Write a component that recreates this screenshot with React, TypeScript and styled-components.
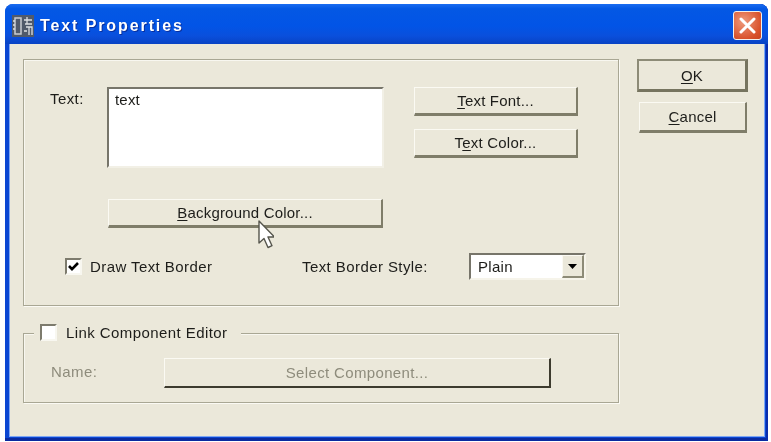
import styled, { createGlobalStyle } from "styled-components"

const Global = createGlobalStyle`
  html, body { margin: 0; background: #fff; }
  body { font-family: "Liberation Sans", Arial, sans-serif; width: 771px; height: 442px; overflow: hidden; }
`

const Dialog = styled.div`
  background: #0a46d2;
  border-radius: 8px 8px 0 0;
  box-shadow: inset -2px 0 0 #0a2cab, inset 0 -3px 0 #0a2a9f;
  box-sizing: border-box;
  display: flex;
  filter: blur(0.35px);
  flex-direction: column;
  height: 437px;
  margin: 4px 0 0 5px;
  padding: 0 3px 4px 4px;
  width: 763px;
`
const TitleBar = styled.div`
  align-items: center;
  background: linear-gradient(180deg, #1a6cf0 0, #0458e4 12%, #0254e6 55%, #0a4fdc 80%, #0843c4 100%);
  border-radius: 8px 8px 0 0;
  box-sizing: border-box;
  display: flex;
  flex: 0 0 40px;
  margin: 0 -3px 0 -4px;
  padding: 3px 6px 0 7px;
`
const TitleText = styled.span`
  color: #fff;
  font-size: 16px;
  font-weight: bold;
  letter-spacing: 1.9px;
  margin-left: 6px;
  text-shadow: 1px 1px 0 #0a2f9c;
`
const CloseButton = styled.div`
  align-items: center;
  background: radial-gradient(circle at 35% 35%, #ee9a7c, #d9522c 70%, #c8431f);
  border: 1px solid #f3f0ea;
  border-radius: 3px;
  display: flex;
  height: 27px;
  justify-content: center;
  margin-left: auto;
  width: 27px;
`
const Body = styled.div`
  background: #ebe8da;
  box-shadow: inset 1px 0 0 #7fa6f2, inset -1px -1px 0 #7fa6f2;
  display: flex;
  flex: 1;
  gap: 18px;
  padding: 15px 0 0 14px;
`
const LeftColumn = styled.div`
  display: flex;
  flex-direction: column;
  gap: 27px;
  width: 596px;
`
const RightColumn = styled.div`
  align-items: flex-start;
  display: flex;
  flex-direction: column;
  gap: 10px;
`
const Group = styled.div<{ $height: number }>`
  border: 1px solid #a9a794;
  box-shadow: 1px 1px 0 #fbfaf4, inset 1px 1px 0 #f8f7f0;
  box-sizing: border-box;
  height: ${p => p.$height}px;
  position: relative;
`
const MainGroup = styled(Group)`
  padding: 27px 0 0 26px;
`
const LinkGroup = styled(Group)`
  align-items: flex-start;
  display: flex;
  padding: 24px 0 0 27px;
`
const Legend = styled.div`
  align-items: center;
  background: #ebe8da;
  display: flex;
  gap: 9px;
  left: 10px;
  padding: 0 14px 0 6px;
  position: absolute;
  top: -10px;
`
const Label = styled.span<{ $disabled?: boolean }>`
  color: ${p => (p.$disabled ? "#8e8c7c" : "#1d1d1a")};
  font-size: 15px;
  letter-spacing: 0.42px;
  white-space: nowrap;
`
const TextRow = styled.div`
  align-items: flex-start;
  display: flex;
`
const TextLabel = styled(Label)`
  flex: 0 0 57px;
  margin-top: 3px;
`
const TextBox = styled.div`
  background: #fff;
  border-color: #77756a #f2f0e6 #f2f0e6 #77756a;
  border-style: solid;
  border-width: 2px;
  box-sizing: border-box;
  color: #1d1d1a;
  font-size: 15px;
  height: 81px;
  letter-spacing: 0.2px;
  padding: 2px 6px;
  width: 277px;
`
const SideButtons = styled.div`
  display: flex;
  flex-direction: column;
  gap: 13px;
  margin-left: 30px;
`
const Button = styled.div<{ $width: number; $height: number }>`
  align-items: center;
  background: #ebe8da;
  border-color: #fbfaf3 #7f7d69 #7f7d69 #fbfaf3;
  border-style: solid;
  border-width: 1px 2px 3px 1px;
  box-sizing: border-box;
  color: #1d1d1a;
  display: flex;
  font-size: 15px;
  height: ${p => p.$height}px;
  justify-content: center;
  letter-spacing: 0.2px;
  white-space: nowrap;
  width: ${p => p.$width}px;
  u { text-underline-offset: 2px; }
`
const BackgroundButton = styled(Button)`
  margin: 31px 0 0 58px;
`
const DefaultButton = styled(Button)`
  border-color: #8d8b77 #76745f #76745f #8d8b77;
  border-width: 2px 3px 3px 2px;
`
const CancelButton = styled(Button)`
  margin-left: 2px;
`
const DisabledButton = styled(Button)`
  border-color: #fbfaf3 #3d3b2e #3d3b2e #fbfaf3;
  border-width: 1px 2px 2px 1px;
  color: #8e8c7c;
  letter-spacing: 0.35px;
  margin-left: 0;
`
const NameLabel = styled(Label)`
  flex: 0 0 113px;
  margin-top: 5px;
`
const OptionsRow = styled.div`
  align-items: center;
  display: flex;
  margin: 25px 0 0 15px;
`
const CheckLabel = styled.div`
  align-items: center;
  display: flex;
  gap: 8px;
  width: 237px;
`
const CheckBox = styled.div`
  align-items: center;
  background: #fff;
  border-color: #7d7b6d #f8f7f0 #f8f7f0 #7d7b6d;
  border-style: solid;
  border-width: 2px;
  box-sizing: border-box;
  display: flex;
  height: 17px;
  justify-content: center;
  width: 17px;
`
const StyleLabel = styled(Label)`
  width: 167px;
`
const Select = styled.div`
  align-items: center;
  background: #fff;
  border-color: #77756a #f6f4ea #f6f4ea #77756a;
  border-style: solid;
  border-width: 2px;
  box-sizing: border-box;
  color: #1d1d1a;
  display: flex;
  font-size: 15px;
  height: 27px;
  justify-content: space-between;
  letter-spacing: 0.3px;
  padding-left: 7px;
  width: 117px;
`
const SelectArrow = styled.div`
  align-items: center;
  align-self: stretch;
  background: #ebe8da;
  border-color: #fbfaf3 #8d8b77 #8d8b77 #fbfaf3;
  border-style: solid;
  border-width: 1px 2px 2px 1px;
  display: flex;
  justify-content: center;
  width: 19px;
`
const Pointer = styled.svg`
  left: 252px;
  position: absolute;
  top: 219px;
`

const WindowIcon = () => (
  <svg width="22" height="22" viewBox="0 0 22 22">
    <rect width="22" height="22" fill="#505a6a" />
    <rect x="3" y="3" width="6" height="16" fill="none" stroke="#c9cdd2" strokeWidth="1.5" />
    <path d="M1 6h2M1 10h2M1 14h2M12 5h8M13 9h7M15 2v7M14 12h6v8M17 12v8M12 16h3" stroke="#dcdfe2" strokeWidth="1.3" fill="none" />
  </svg>
)

const App = () => (
  <>
    <Global />
    <Dialog>
      <TitleBar>
        <WindowIcon />
        <TitleText>Text Properties</TitleText>
        <CloseButton>
          <svg width="17" height="17" viewBox="0 0 17 17">
            <path d="M2 2l13 13M15 2L2 15" stroke="#fff" strokeWidth="3" strokeLinecap="round" />
          </svg>
        </CloseButton>
      </TitleBar>
      <Body>
        <LeftColumn>
          <MainGroup $height={247}>
            <TextRow>
              <TextLabel>Text:</TextLabel>
              <TextBox>text</TextBox>
              <SideButtons>
                <Button $width={164} $height={29}><span><u>T</u>ext Font...</span></Button>
                <Button $width={164} $height={29}><span>T<u>e</u>xt Color...</span></Button>
              </SideButtons>
            </TextRow>
            <BackgroundButton $width={275} $height={29}><span><u>B</u>ackground Color...</span></BackgroundButton>
            <OptionsRow>
              <CheckLabel>
                <CheckBox>
                  <svg width="11" height="11" viewBox="0 0 11 11">
                    <path d="M1 5l3 3.2L10 2" fill="none" stroke="#000" strokeWidth="2.6" />
                  </svg>
                </CheckBox>
                <Label>Draw Text Border</Label>
              </CheckLabel>
              <StyleLabel>Text Border Style:</StyleLabel>
              <Select>
                Plain
                <SelectArrow>
                  <svg width="9" height="5" viewBox="0 0 9 5"><path d="M0 0h9L4.5 5z" fill="#000" /></svg>
                </SelectArrow>
              </Select>
            </OptionsRow>
          </MainGroup>
          <LinkGroup $height={70}>
            <Legend>
              <CheckBox />
              <Label>Link Component Editor</Label>
            </Legend>
            <NameLabel $disabled>Name:</NameLabel>
            <DisabledButton $width={387} $height={30}>Select Component...</DisabledButton>
          </LinkGroup>
        </LeftColumn>
        <RightColumn>
          <DefaultButton $width={111} $height={33}><span><u>O</u>K</span></DefaultButton>
          <CancelButton $width={108} $height={31}><span><u>C</u>ancel</span></CancelButton>
        </RightColumn>
      </Body>
    </Dialog>
    <Pointer width="22" height="32" viewBox="0 0 22 32">
      <path d="M7 2v22l5-4.5 4 9 4-1.8-4-8.7h6.5z" fill="#fff" stroke="#55554c" strokeWidth="1.4" strokeLinejoin="round" />
    </Pointer>
  </>
)

export default App
